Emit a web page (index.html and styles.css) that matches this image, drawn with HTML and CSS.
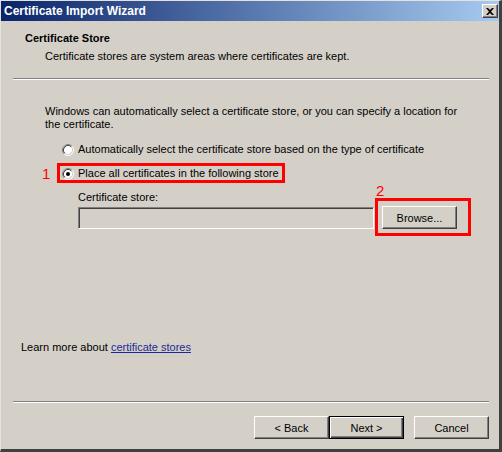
FILE: index.html
```html
<!DOCTYPE html>
<html>
<head>
<meta charset="utf-8">
<link rel="stylesheet" href="styles.css">
</head>
<body>
<div class="window">
  <div class="titlebar">
    <span class="title">Certificate Import Wizard</span>
    <button class="close" aria-label="Close">
      <svg width="8" height="7" viewBox="0 0 8 7"><path d="M0 0h2l2 2 2-2h2L5 3.5 8 7H6L4 5 2 7H0l3-3.5z" fill="#000"/></svg>
    </button>
  </div>
  <div class="header">
    <div class="h-title">Certificate Store</div>
    <div class="h-sub">Certificate stores are system areas where certificates are kept.</div>
  </div>
  <div class="sep"></div>
  <div class="body">
    <p class="intro">Windows can automatically select a certificate store, or you can specify a location for<br>the certificate.</p>
    <div class="radio opt1">
      <svg class="rb" width="12" height="12" viewBox="0 0 12 12">
        <circle cx="6" cy="6" r="4.5" fill="#fff"/>
        <path d="M2.11 9.89A5.5 5.5 0 0 1 9.89 2.11" fill="none" stroke="#808080"/>
        <path d="M2.82 9.18A4.5 4.5 0 0 1 9.18 2.82" fill="none" stroke="#404040"/>
        <path d="M9.89 2.11A5.5 5.5 0 0 1 2.11 9.89" fill="none" stroke="#fff"/>
        <path d="M9.18 2.82A4.5 4.5 0 0 1 2.82 9.18" fill="none" stroke="#D4D0C8"/>
      </svg>
      <span>Automatically select the certificate store based on the type of certificate</span>
    </div>
    <div class="marked">
      <span class="num n1">1</span>
      <div class="radio">
        <svg class="rb" width="12" height="12" viewBox="0 0 12 12">
          <circle cx="6" cy="6" r="4.5" fill="#fff"/>
          <path d="M2.11 9.89A5.5 5.5 0 0 1 9.89 2.11" fill="none" stroke="#808080"/>
          <path d="M2.82 9.18A4.5 4.5 0 0 1 9.18 2.82" fill="none" stroke="#404040"/>
          <path d="M9.89 2.11A5.5 5.5 0 0 1 2.11 9.89" fill="none" stroke="#fff"/>
          <path d="M9.18 2.82A4.5 4.5 0 0 1 2.82 9.18" fill="none" stroke="#D4D0C8"/>
          <circle cx="6" cy="6" r="2" fill="#000"/>
        </svg>
        <span>Place all certificates in the following store</span>
      </div>
    </div>
    <div class="store-label">Certificate store:</div>
    <div class="store-row">
      <div class="field"></div>
      <div class="browse-wrap">
        <span class="num n2">2</span>
        <button class="btn">Browse...</button>
        <span class="hl"></span>
      </div>
    </div>
  </div>
  <div class="learn">Learn more about <a href="#" class="link">certificate stores</a></div>
  <div class="sep sep2"></div>
  <div class="footer">
    <button class="btn">&lt; Back</button>
    <button class="btn default">Next &gt;</button>
    <button class="btn cancel">Cancel</button>
  </div>
</div>
</body>
</html>
```
FILE: styles.css
```css
html, body {
  margin: 0;
  padding: 0;
  background: #D4D0C8;
}
body {
  font-family: "Liberation Sans", Arial, sans-serif;
  font-size: 11px;
  line-height: 13px;
  color: #000;
}
.window {
  width: 502px;
  height: 452px;
  box-sizing: border-box;
  background: #D4D0C8;
  border-top: 1px solid #E4E2DC;
  border-left: 1px solid #E4E2DC;
  border-right: 3px solid #404040;
  border-bottom: 3px solid #404040;
  display: flex;
  flex-direction: column;
}
.titlebar {
  height: 20px;
  flex: none;
  display: flex;
  align-items: center;
  justify-content: space-between;
  padding: 0 1px 0 3px;
  background: linear-gradient(to right, #0A246A, #A6CAF0);
}
.title {
  color: #fff;
  font-weight: bold;
  font-size: 12px;
}
.close {
  width: 16px;
  height: 14px;
  padding: 0;
  margin: 0;
  display: flex;
  align-items: center;
  justify-content: center;
  background: #D4D0C8;
  border: 1px solid;
  border-color: #fff #404040 #404040 #fff;
  box-shadow: inset -1px -1px #808080;
}
.header {
  padding: 11px 0 0 24px;
}
.h-title {
  font-weight: bold;
}
.h-sub {
  margin-top: 5px;
  margin-left: 20px;
}
.sep {
  margin: 15px 10px 0 12px;
  border-top: 1px solid #808080;
  border-bottom: 1px solid #fff;
  height: 0;
}
.body {
  padding-left: 44px;
}
.intro {
  margin: 25px 0 0 0;
}
.radio {
  display: flex;
  align-items: center;
  gap: 4px;
  height: 13px;
}
.rb {
  flex: none;
  display: block;
}
.opt1 {
  margin: 12px 0 0 17px;
}
.marked {
  position: relative;
  margin: 7px 0 0 12px;
  width: 228px;
  height: 20px;
  box-sizing: border-box;
  border: 3px solid #FF0000;
  padding: 1px 0 0 2px;
}
.num {
  position: absolute;
  color: #FF0000;
  font-size: 15px;
  line-height: 15px;
}
.n1 {
  left: -18px;
  top: 0;
}
.store-label {
  margin: 8px 0 0 33px;
}
.store-row {
  margin: 2px 0 0 33px;
  display: flex;
  align-items: flex-end;
  gap: 8px;
}
.field {
  width: 296px;
  height: 22px;
  box-sizing: border-box;
  background: #D4D0C8;
  border: 1px solid;
  border-color: #808080 #fff #fff #808080;
  box-shadow: inset 1px 1px #404040;
}
.browse-wrap {
  position: relative;
}
.n2 {
  left: -6px;
  top: -23px;
}
.hl {
  position: absolute;
  left: -7px;
  top: -8px;
  width: 96px;
  height: 38px;
  box-sizing: border-box;
  border: 3px solid #FF0000;
  pointer-events: none;
}
.btn {
  display: block;
  width: 75px;
  height: 23px;
  box-sizing: border-box;
  padding: 0;
  margin: 0;
  font-family: "Liberation Sans", Arial, sans-serif;
  font-size: 11px;
  color: #000;
  background: #D4D0C8;
  border: 1px solid;
  border-color: #fff #404040 #404040 #fff;
  box-shadow: inset -1px -1px #808080;
}
.learn {
  margin-top: 112px;
  padding-left: 20px;
}
.link {
  color: #1B2A9A;
  text-decoration: underline;
}
.sep2 {
  margin-top: 47px;
}
.footer {
  margin-top: 13px;
  display: flex;
  justify-content: flex-end;
  padding-right: 10px;
}
.default {
  border: 1px solid #000;
  box-shadow: inset 1px 1px #fff, inset -1px -1px #404040, inset -2px -2px #808080;
}
.cancel {
  margin-left: 10px;
}
```
